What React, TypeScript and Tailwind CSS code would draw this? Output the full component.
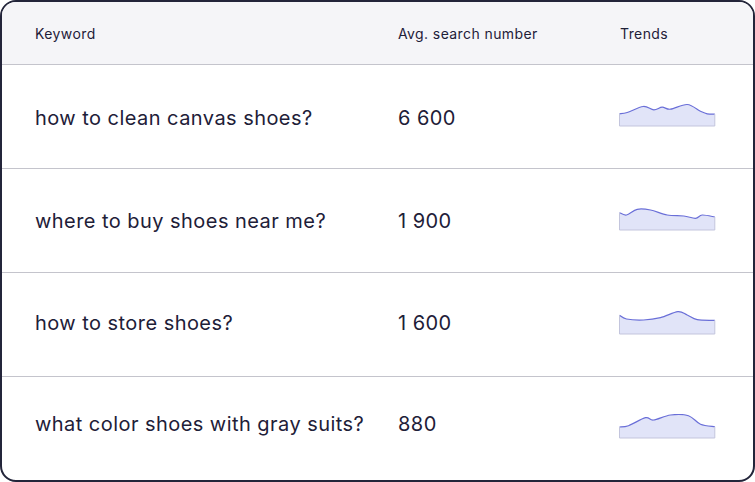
import React from "react";

type Pt = [number, number];

const rows: { keyword: string; avg: string; shift: string; trend: Pt[] }[] = [
  {
    keyword: "how to clean canvas shoes?",
    avg: "6 600",
    shift: "pt-[2px]",
    trend: [
      [0, 11.8], [7.7, 10.5], [23.7, 4.5], [34.3, 7.8], [42.7, 5.2],
      [51, 7.2], [67.7, 2.5], [81, 9.2], [87.7, 11.8], [95.3, 12.2],
    ],
  },
  {
    keyword: "where to buy shoes near me?",
    avg: "1 900",
    shift: "pt-0",
    trend: [
      [0, 6.7], [7, 9], [17.7, 3.3], [31, 4], [47.7, 9],
      [64.3, 10], [76, 12.3], [82.7, 9], [95.3, 11],
    ],
  },
  {
    keyword: "how to store shoes?",
    avg: "1 600",
    shift: "pb-[4px]",
    trend: [
      [0, 5.3], [7, 9], [24, 10], [41, 7.7], [58.3, 1.7],
      [67.7, 5], [77.7, 9.7], [95.3, 10.3],
    ],
  },
  {
    keyword: "what color shoes with gray suits?",
    avg: "880",
    shift: "pb-[10px]",
    trend: [
      [0, 13], [9, 11.7], [26, 3.7], [34, 6], [51, 1],
      [69, 1.7], [81, 10.3], [95.3, 12.7],
    ],
  },
];

// catmull-rom -> cubic bezier
function smooth(pts: Pt[]) {
  let d = `M${pts[0][0]},${pts[0][1]}`;
  for (let i = 0; i < pts.length - 1; i++) {
    const p0 = pts[i - 1] ?? pts[i];
    const p1 = pts[i];
    const p2 = pts[i + 1];
    const p3 = pts[i + 2] ?? p2;
    const c1x = p1[0] + (p2[0] - p0[0]) / 6;
    const c1y = p1[1] + (p2[1] - p0[1]) / 6;
    const c2x = p2[0] - (p3[0] - p1[0]) / 6;
    const c2y = p2[1] - (p3[1] - p1[1]) / 6;
    d += ` C${c1x},${c1y} ${c2x},${c2y} ${p2[0]},${p2[1]}`;
  }
  return d;
}

function Spark({ pts }: { pts: Pt[] }) {
  const line = smooth(pts);
  const base = 24;
  const last = pts[pts.length - 1];
  return (
    <svg width="97" height="30" viewBox="-0.5 0 97 30" className="block">
      <path
        d={`${line} L${last[0]},${base} L${pts[0][0]},${base} Z`}
        fill="#e1e4f8"
      />
      <path d={line} fill="none" stroke="#6a6fd8" strokeWidth="1.2" />
      <path d={`M0,${pts[0][1]} V${base} H${last[0]} V${last[1]}`} fill="none" stroke="#c3c5dd" strokeWidth="1" />
    </svg>
  );
}

export default function App() {
  return (
    <div
      className="w-[755px] h-[482px] bg-white"
      style={{ fontFamily: "Inter, 'Open Sans', sans-serif" }}
    >
      <div className="w-[755px] h-[482px] border-2 border-[#23253a] rounded-[16px] overflow-hidden text-[#1e2038]">
        {/* header */}
        <div className="flex items-center h-[63px] bg-[#f5f5f8] border-b border-[#c4c4cc] text-[14px] tracking-[0.4px]">
          <div className="w-[396px] pl-[33px]">Keyword</div>
          <div className="w-[222px]">Avg. search number</div>
          <div>Trends</div>
        </div>

        {rows.map((r, i) => (
          <div
            key={r.keyword}
            className={`flex items-center h-[104px] text-[20px] tracking-[0.45px] ${i < rows.length - 1 ? "border-b border-[#c4c4cc]" : ""}`}
          >
            <div className={`w-[396px] pl-[33px] ${r.shift}`}>{r.keyword}</div>
            <div className={`w-[221px] ${r.shift}`}>{r.avg}</div>
            <Spark pts={r.trend} />
          </div>
        ))}
      </div>
    </div>
  );
}
